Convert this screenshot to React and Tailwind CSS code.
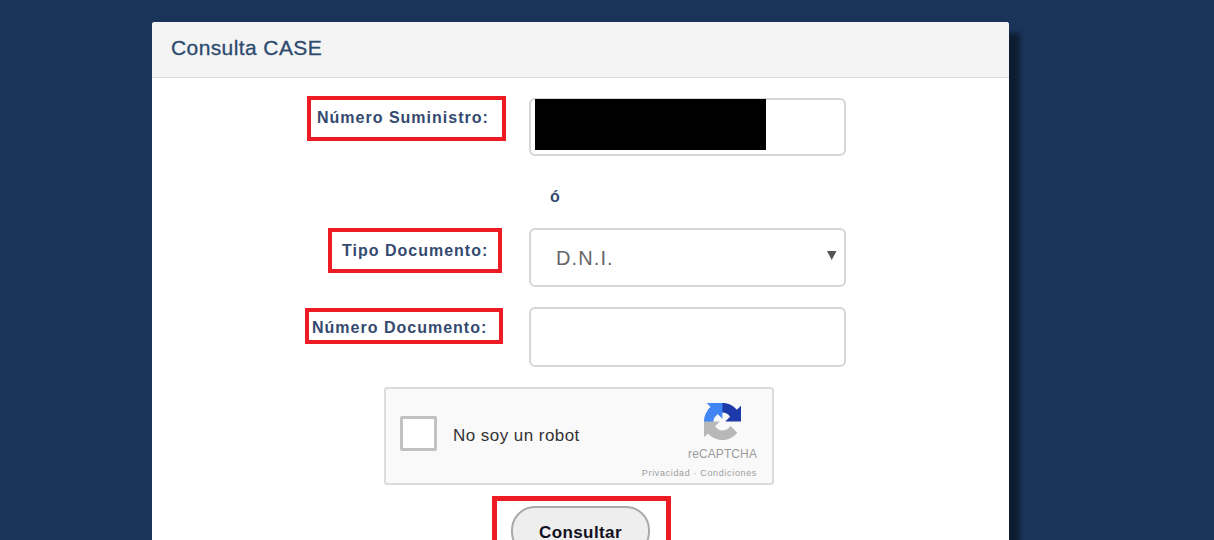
export default function App() {
  const label = "block font-bold text-[16px] leading-none tracking-[1px] text-[#34496f] whitespace-nowrap";
  return (
    <div className="h-[540px] overflow-hidden bg-[#1a3459] pt-[22px] font-['Liberation_Sans',Arial,sans-serif]">
      <div className="ml-[152px] w-[857px] h-[600px] rounded-t-[3px] bg-white shadow-[11px_11px_5px_rgba(0,0,0,0.45)]">
        <div className="h-[56px] rounded-t-[3px] border-b border-[#dddddd] bg-[#f4f4f4] pl-[19px] pt-[14px] text-[21px] leading-[23px] tracking-[0.4px] text-[#2d4a6e] [-webkit-text-stroke:0.3px_#2d4a6e]">
          Consulta CASE
        </div>
        <div className="pt-[18px]">
          <div className="flex">
            <div className="flex w-[377px] justify-end pr-[23px]">
              <div className="h-[45px] w-[199px] border-[4px] border-[#ed1c24] pl-[6px] pt-[10px]">
                <span className={label}>Número Suministro:</span>
              </div>
            </div>
            <div className="mt-[2px] h-[58px] w-[317px] rounded-[6px] border-2 border-[#d6d6d6] pl-[4px]">
              <div className="-mt-[1px] h-[51px] w-[231px] bg-black" />
            </div>
          </div>
          <div className="flex h-[72px] items-center pt-[10px] pl-[398px] text-[16px] font-bold text-[#34496f]">ó</div>
          <div className="flex">
            <div className="flex w-[377px] justify-end pr-[27px]">
              <div className="h-[45px] w-[174px] border-[4px] border-[#ed1c24] pl-[10px] pt-[11px]">
                <span className={label}>Tipo Documento:</span>
              </div>
            </div>
            <div className="relative flex h-[59px] w-[317px] items-center rounded-[6px] border-2 border-[#d6d6d6] pl-[25px] text-[20px] tracking-[1.1px] text-[#666666]">
              D.N.I.
              <svg className="absolute right-[7px] top-[21px]" width="10" height="10" viewBox="0 0 10 10">
                <path d="M0 0H9.5L4.75 9Z" fill="#555555" />
              </svg>
            </div>
          </div>
          <div className="mt-[20px] flex">
            <div className="flex w-[377px] justify-end pr-[26px]">
              <div className="mt-[1px] h-[36px] w-[198px] border-[4px] border-[#ed1c24] pl-[3px] pt-[8px]">
                <span className={label}>Número Documento:</span>
              </div>
            </div>
            <div className="h-[60px] w-[317px] rounded-[6px] border-2 border-[#d6d6d6]" />
          </div>
          <div className="ml-[232px] mt-[20px] flex h-[98px] w-[390px] items-start rounded-[3px] border-2 border-[#dcdcdc] bg-[#f9f9f9]">
            <div className="ml-[14px] mt-[27px] h-[35px] w-[37px] rounded-[2px] border-[3px] border-[#c1c1c1] bg-white" />
            <div className="ml-[16px] mt-[37px] whitespace-nowrap text-[17px] leading-[19px] tracking-[0.45px] text-[#333333]">No soy un robot</div>
            <div className="ml-auto mr-[15px] flex flex-col items-end">
              <svg className="mr-[16px] mt-[14px]" width="37" height="37" viewBox="0 0 64 64">
                <path d="M64 31.955l-.033-1.37V4.687l-7.16 7.16C50.948 4.674 42.033.093 32.05.093c-10.4 0-19.622 4.96-25.458 12.64l11.736 11.86a15.55 15.55 0 0 1 4.754-5.334c2.05-1.6 4.952-2.906 8.968-2.906.485 0 .86.057 1.135.163 4.976.393 9.29 3.14 11.83 7.125l-8.307 8.307L64 31.953" fill="#1c3aa9" />
                <path d="M31.862.094l-1.37.033H4.594l7.16 7.16C4.58 13.147 0 22.06 0 32.046c0 10.4 4.96 19.622 12.64 25.458l11.86-11.736a15.55 15.55 0 0 1-5.334-4.754c-1.6-2.05-2.906-4.952-2.906-8.968 0-.485.057-.86.163-1.135.393-4.976 3.14-9.29 7.125-11.83l8.307 8.307L31.86.095" fill="#4285f4" />
                <path d="M.001 32.045l.033 1.37v25.898l7.16-7.16c5.86 7.173 14.774 11.754 24.76 11.754 10.4 0 19.622-4.96 25.458-12.64L45.676 39.41a15.55 15.55 0 0 1-4.754 5.334c-2.05 1.6-4.952 2.906-8.968 2.906-.485 0-.86-.057-1.135-.163-4.976-.393-9.29-3.14-11.83-7.125l8.307-8.307c-10.522.04-22.4.066-27.295-.005" fill="#b8b8b8" />
              </svg>
              <div className="mt-[7px] text-[12px] leading-[14px] tracking-[0.1px] text-[#9b9b9b]">reCAPTCHA</div>
              <div className="mt-[7px] whitespace-nowrap text-[9px] leading-[11px] tracking-[0.65px] text-[#9b9b9b]">Privacidad · Condiciones</div>
            </div>
          </div>
          <div className="ml-[340px] mt-[11px] h-[60px] w-[179px] border-[5px] border-[#ed1c24] pl-[14px] pt-[5px]">
            <div className="flex h-[50px] w-[139px] items-start justify-center rounded-[24px] border-2 border-[#aaaaaa] bg-[#eeeeee] pt-[15px] text-[17px] font-bold leading-[20px] tracking-[0.4px] text-[#111122]">
              Consultar
            </div>
          </div>
        </div>
      </div>
    </div>
  );
}
